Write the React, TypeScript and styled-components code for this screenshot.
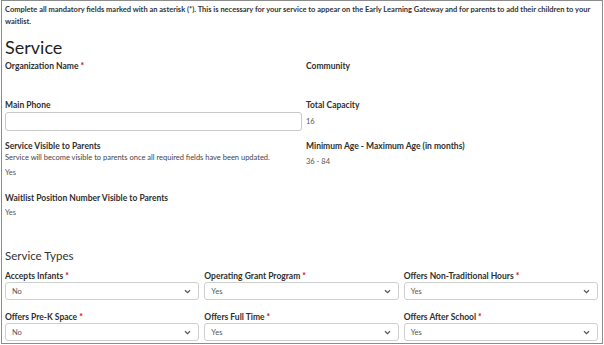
import * as React from "react";
import styled, { createGlobalStyle } from "styled-components";

const GlobalStyle = createGlobalStyle`
    html, body {
        margin: 0;
        padding: 0;
        background: #fff;
    }
    body {
        font-family: Lato, "Open Sans", sans-serif;
        color: #2b2b2b;
    }
`;

const Frame = styled.div`
    box-sizing: border-box;
    width: 602px;
    height: 344px;
    margin-left: 1px;
    border: 1px solid #8c8c8c;
    padding: 3px 3px 0 3px;
    overflow: hidden;
`;

const Notice = styled.p`
    margin: 0;
    font-size: 7.5px;
    line-height: 12px;
    font-weight: 700;
    color: #333;
`;

const Heading = styled.h1`
    margin: 8px 0 2px 0;
    font-size: 18px;
    line-height: 22px;
    font-weight: 400;
    color: #1f1f1f;
`;

const SubHeading = styled.h2`
    margin: 0;
    font-size: 11.5px;
    line-height: 16px;
    font-weight: 400;
    color: #333;
`;

const DetailsGrid = styled.div`
    display: grid;
    grid-template-columns: 297px 1fr;
    grid-template-rows: 39px 41px 52px 40px;
    column-gap: 4px;
    margin-bottom: 16px;
`;

const Field = styled.div`
    display: flex;
    flex-direction: column;
`;

const Label = styled.div`
    font-size: 8.5px;
    line-height: 12px;
    font-weight: 700;
    color: #2f2f2f;
    white-space: nowrap;
`;

const Required = styled.span`
    color: #d0021b;
    margin-left: 2px;
`;

const Hint = styled.div`
    font-size: 7.5px;
    line-height: 12px;
    color: #444;
`;

const Value = styled.div<{ $gap?: number }>`
    font-size: 7.5px;
    line-height: 12px;
    color: #555;
    margin-top: ${p => p.$gap ?? 3}px;
`;

const TextInput = styled.div`
    box-sizing: border-box;
    height: 19px;
    margin-top: 1px;
    border: 1px solid #c9c9c9;
    border-radius: 3px;
    background: #fff;
`;

const TypesGrid = styled.div`
    display: grid;
    grid-template-columns: repeat(3, 1fr);
    column-gap: 5px;
    row-gap: 11px;
    margin-top: 6px;
    padding-right: 1px;
`;

const SelectBox = styled.div`
    box-sizing: border-box;
    height: 18px;
    border: 1px solid #cfcfcf;
    border-radius: 3px;
    display: flex;
    align-items: center;
    justify-content: space-between;
    padding: 0 7px 0 6px;
    font-size: 7.5px;
    color: #555;
`;

const Chevron = () => (
    <svg width="7" height="5" viewBox="0 0 7 5">
        <path d="M1 1.2 L3.5 3.6 L6 1.2" fill="none" stroke="#555" strokeWidth="1.2" />
    </svg>
);

const serviceTypes = [
    { label: "Accepts Infants", value: "No" },
    { label: "Operating Grant Program", value: "Yes" },
    { label: "Offers Non-Traditional Hours", value: "Yes" },
    { label: "Offers Pre-K Space", value: "No" },
    { label: "Offers Full Time", value: "Yes" },
    { label: "Offers After School", value: "Yes" },
];

export default function App() {
    return <Frame>
        <GlobalStyle />
        <Notice>
            Complete all mandatory fields marked with an asterisk (*). This is necessary for your service to appear on the Early Learning Gateway and for parents to add their children to your waitlist.
        </Notice>
        <Heading>Service</Heading>
        <DetailsGrid>
            <Field>
                <Label>Organization Name<Required>*</Required></Label>
            </Field>
            <Field>
                <Label>Community</Label>
            </Field>
            <Field>
                <Label>Main Phone</Label>
                <TextInput />
            </Field>
            <Field>
                <Label>Total Capacity</Label>
                <Value $gap={5}>16</Value>
            </Field>
            <Field>
                <Label>Service Visible to Parents</Label>
                <Hint>Service will become visible to parents once all required fields have been updated.</Hint>
                <Value>Yes</Value>
            </Field>
            <Field>
                <Label>Minimum Age - Maximum Age (in months)</Label>
                <Value $gap={4}>36 - 84</Value>
            </Field>
            <Field>
                <Label>Waitlist Position Number Visible to Parents</Label>
                <Value>Yes</Value>
            </Field>
            <Field />
        </DetailsGrid>
        <SubHeading>Service Types</SubHeading>
        <TypesGrid>
            {serviceTypes.map(t => <Field key={t.label}>
                <Label>{t.label}<Required>*</Required></Label>
                <SelectBox>
                    <span>{t.value}</span>
                    <Chevron />
                </SelectBox>
            </Field>)}
        </TypesGrid>
    </Frame>
}
